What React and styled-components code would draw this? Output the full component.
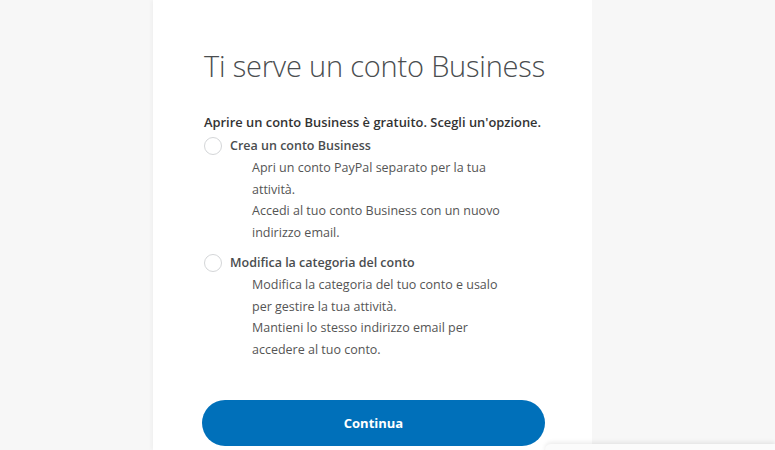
import React from 'react';
import styled, { createGlobalStyle } from 'styled-components';

const GlobalStyle = createGlobalStyle`
	html, body {
		margin: 0;
		padding: 0;
		background: #f7f7f7;
		font-family: 'Open Sans', 'Noto Sans', sans-serif;
		height: 100%;
		overflow: hidden;
	}
`;

const Page = styled.div`
	min-height: 100vh;
	display: flex;
	padding-left: 153px;
`;

const Column = styled.div`
	width: 439px;
	min-height: 100vh;
	background: #ffffff;
	box-shadow: -2px 0 4px rgba(0, 0, 0, 0.03);
	padding: 46px 0 0 51px;
	box-sizing: border-box;
`;

const Title = styled.h1`
	margin: 0;
	font-size: 29px;
	font-weight: 300;
	color: #4a4d4f;
	letter-spacing: -0.2px;
	line-height: 40px;
`;

const Intro = styled.p`
	margin: 27px 0 0 0;
	font-size: 12.9px;
	font-weight: 600;
	color: #333;
	line-height: 18px;
`;

const Option = styled.label`
	display: grid;
	grid-template-columns: 26px 1fr;
	margin-top: ${(props) => (props.second ? '10px' : '5px')};
`;

const Radio = styled.span`
	width: 16px;
	height: 16px;
	border-radius: 50%;
	border: 1px solid #d4d6d8;
	margin-top: 1px;
`;

const OptionLabel = styled.div`
	font-size: 12.5px;
	font-weight: 600;
	color: #4a4d4f;
	line-height: 19px;
`;

const Description = styled.div`
	grid-column: 2;
	padding-left: 22px;
	width: 262px;
	font-size: 12.5px;
	color: #555;
	line-height: 21.5px;
	margin-top: 2px;

	p {
		margin: 0;
	}
`;

const Button = styled.button`
	display: block;
	margin: 40px 0 0 -2px;
	width: 343px;
	height: 46px;
	border: none;
	border-radius: 23px;
	background: #0070ba;
	color: #fff;
	font-family: inherit;
	font-size: 13px;
	font-weight: 700;
	cursor: pointer;
`;

const FooterEdge = styled.div`
	position: fixed;
	left: 545px;
	right: 0;
	top: 444px;
	height: 40px;
	background: #fbfbfb;
	box-shadow: 0 -2px 4px rgba(0, 0, 0, 0.08);
	border-top-left-radius: 6px;
`;

export default function App() {
	return (
		<>
			<GlobalStyle />
			<Page>
				<Column>
					<Title>Ti serve un conto Business</Title>
					<Intro>Aprire un conto Business è gratuito. Scegli un'opzione.</Intro>
					<Option>
						<Radio />
						<OptionLabel>Crea un conto Business</OptionLabel>
						<Description>
							<p>Apri un conto PayPal separato per la tua attività.</p>
							<p>Accedi al tuo conto Business con un nuovo indirizzo email.</p>
						</Description>
					</Option>
					<Option second>
						<Radio />
						<OptionLabel>Modifica la categoria del conto</OptionLabel>
						<Description>
							<p>Modifica la categoria del tuo conto e usalo per gestire la tua attività.</p>
							<p>Mantieni lo stesso indirizzo email per accedere al tuo conto.</p>
						</Description>
					</Option>
					<Button>Continua</Button>
				</Column>
			</Page>
			<FooterEdge />
		</>
	);
}
